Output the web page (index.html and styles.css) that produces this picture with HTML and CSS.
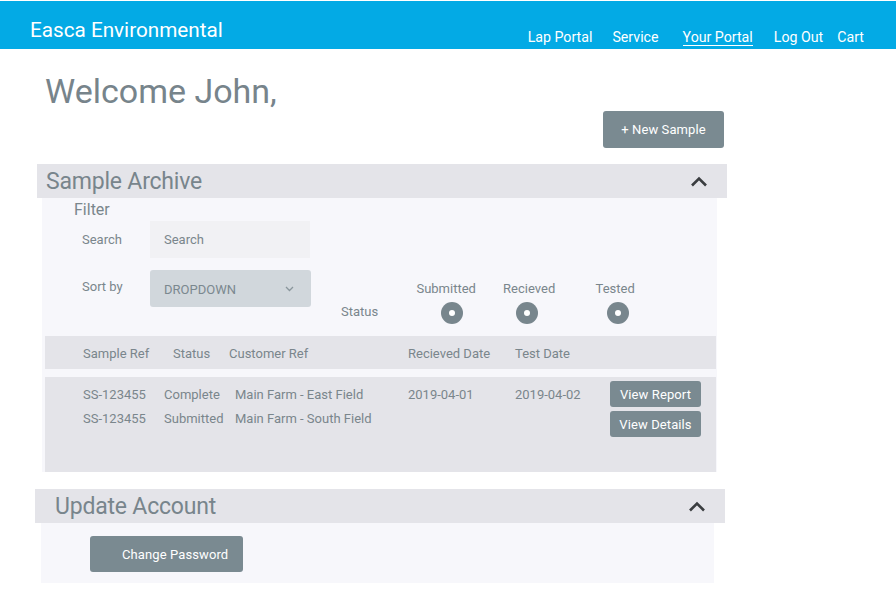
FILE: index.html
```html
<!DOCTYPE html>
<html>
<head>
<meta charset="utf-8">
<link rel="stylesheet" href="styles.css">
</head>
<body>
<header class="topbar">
  <div class="brand">Easca Environmental</div>
  <nav class="nav">
    <a class="nav-link">Lap Portal</a>
    <a class="nav-link">Service</a>
    <a class="nav-link active">Your Portal</a>
    <a class="nav-link">Log Out</a>
    <a class="nav-link cart">Cart</a>
  </nav>
</header>
<main class="main">
  <h1 class="welcome">Welcome John,</h1>
  <div class="actions">
    <button class="btn btn-new">+ New Sample</button>
  </div>

  <section class="section archive">
    <div class="section-head">
      <h2 class="section-title">Sample Archive</h2>
      <svg class="chevron" width="18" height="11" viewBox="0 0 18 11"><path d="M2 9.5 L9 2.5 L16 9.5" fill="none" stroke="#3a3d40" stroke-width="2.6"/></svg>
    </div>
    <div class="panel archive-panel">
      <div class="filter-title">Filter</div>
      <div class="filter-area">
        <div class="fields">
          <div class="field-row">
            <span class="field-label">Search</span>
            <div class="input">Search</div>
          </div>
          <div class="field-row">
            <span class="field-label sort">Sort by</span>
            <div class="select"><span>DROPDOWN</span>
              <svg width="9" height="6" viewBox="0 0 9 6"><path d="M1 1 L4.5 4.5 L8 1" fill="none" stroke="#8a969c" stroke-width="1.3"/></svg>
            </div>
          </div>
        </div>
        <div class="status">
          <span class="status-label">Status</span>
          <div class="status-col c1"><span>Submitted</span><i class="dot"></i></div>
          <div class="status-col c2"><span>Recieved</span><i class="dot"></i></div>
          <div class="status-col c3"><span>Tested</span><i class="dot"></i></div>
        </div>
      </div>
      <div class="table">
        <div class="thead">
          <span class="h1c">Sample Ref</span>
          <span class="h2c">Status</span>
          <span class="h3c">Customer Ref</span>
          <span class="h4c">Recieved Date</span>
          <span class="h5c">Test Date</span>
        </div>
        <div class="tbody">
          <div class="rows">
            <div class="row">
              <span class="d1">SS-123455</span>
              <span class="d2">Complete</span>
              <span class="d3">Main Farm - East Field</span>
              <span class="d4">2019-04-01</span>
              <span class="d5">2019-04-02</span>
            </div>
            <div class="row">
              <span class="d1">SS-123455</span>
              <span class="d2">Submitted</span>
              <span class="d3">Main Farm - South Field</span>
              <span class="d4"></span>
              <span class="d5"></span>
            </div>
          </div>
          <div class="row-actions">
            <button class="btn btn-sm">View Report</button>
            <button class="btn btn-sm">View Details</button>
          </div>
        </div>
      </div>
    </div>
  </section>

  <section class="section account">
    <div class="section-head">
      <h2 class="section-title">Update Account</h2>
      <svg class="chevron" width="18" height="11" viewBox="0 0 18 11"><path d="M2 9.5 L9 2.5 L16 9.5" fill="none" stroke="#3a3d40" stroke-width="2.6"/></svg>
    </div>
    <div class="panel account-panel">
      <button class="btn btn-pass">Change Password</button>
    </div>
  </section>
</main>
</body>
</html>
```
FILE: styles.css
```css
* { box-sizing: border-box; }
html, body { margin: 0; padding: 0; background: #ffffff; }
body {
  font-family: Roboto, "Liberation Sans", Arial, sans-serif;
  color: #7a868c;
  padding-top: 1px;
}
.topbar {
  height: 48px;
  background: #03aae5;
  display: flex;
  justify-content: space-between;
  color: #ffffff;
}
.brand {
  font-size: 20.7px;
  padding-left: 30px;
  padding-top: 17px;
  line-height: 24px;
}
.nav {
  display: flex;
  padding-right: 32px;
  padding-top: 27px;
}
.nav-link {
  font-size: 14.2px;
  line-height: 18px;
  margin-left: 20px;
  color: #ffffff;
}
.nav-link.active {
  margin-left: 24px;
  margin-right: 1px;
  border-bottom: 1px solid #ffffff;
  height: 18px;
}
.nav-link.cart { margin-left: 14px; }

.main {
  padding-left: 37px;
  width: 727px;
}
.welcome {
  margin: 0;
  padding-left: 8px;
  padding-top: 21px;
  font-size: 34px;
  font-weight: 400;
  line-height: 42px;
  color: #77848b;
}
.actions {
  display: flex;
  justify-content: flex-end;
  padding-right: 3px;
  margin-top: -1px;
}
.btn {
  font-family: Roboto, "Liberation Sans", Arial, sans-serif;
  border: 0;
  background: #7a8a91;
  color: #ffffff;
  border-radius: 3px;
  padding: 0;
  cursor: pointer;
  font-weight: 400;
  letter-spacing: 0.1px;
}
.btn-new {
  width: 121px;
  height: 37px;
  font-size: 13px;
}
.section { width: 690px; }
.archive { margin-top: 16px; }
.section-head {
  height: 34px;
  background: #e4e4e9;
  display: flex;
  align-items: center;
  justify-content: space-between;
  padding-right: 19px;
}
.section-title {
  margin: 0;
  font-size: 23px;
  font-weight: 400;
  line-height: 34px;
  padding-left: 9px;
  padding-top: 2px;
  color: #78858c;
  letter-spacing: -0.2px;
}
.panel { background: #f7f7fb; }
.archive-panel {
  margin-left: 5px;
  width: 675px;
  padding-top: 2px;
}
.filter-title {
  font-size: 16px;
  line-height: 20px;
  padding-left: 32px;
}
.filter-area {
  display: flex;
  align-items: flex-start;
}
.fields {
  padding-left: 40px;
  padding-top: 1px;
}
.field-row {
  display: flex;
  align-items: center;
}
.field-row + .field-row { margin-top: 12px; }
.field-label {
  width: 68px;
  font-size: 13px;
  position: relative;
  top: 0;
}
.field-label.sort { top: -2px; }
.input {
  width: 160px;
  height: 37px;
  background: #f1f1f4;
  font-size: 13px;
  line-height: 37px;
  padding-left: 14px;
  color: #7a868c;
}
.select {
  width: 161px;
  height: 37px;
  background: #d1d7dc;
  border-radius: 3px;
  display: flex;
  align-items: center;
  justify-content: space-between;
  padding-left: 14px;
  padding-right: 17px;
  font-size: 13px;
  color: #7b888f;
}
.select span { position: relative; top: 1px; }
.status {
  display: flex;
  align-items: flex-end;
  margin-left: 30px;
  padding-top: 60px;
}
.status-label {
  font-size: 13px;
  line-height: 16px;
  margin-bottom: 4px;
}
.status-col {
  display: flex;
  flex-direction: column;
  align-items: center;
  font-size: 13px;
  line-height: 16px;
}
.status-col.c1 { margin-left: 37px; width: 62px; }
.status-col.c2 { margin-left: 24px; width: 56px; }
.status-col.c3 { margin-left: 37px; width: 42px; }
.status-col span { white-space: nowrap; position: relative; top: 1px; }
.status-col.c1 .dot { margin-left: 12px; }
.status-col.c2 .dot { margin-left: -5px; }
.status-col.c3 .dot { margin-left: 5px; }
.dot {
  display: block;
  width: 22px;
  height: 22px;
  border-radius: 50%;
  background: #78868d;
  margin-top: 6px;
  position: relative;
}
.dot::after {
  content: "";
  position: absolute;
  left: 8px;
  top: 8px;
  width: 6px;
  height: 6px;
  border-radius: 50%;
  background: #ffffff;
}
.table {
  margin: 12px 1px 0 3px;
}
.thead {
  height: 33px;
  background: #e4e4e9;
  display: flex;
  align-items: center;
  padding-left: 38px;
  padding-top: 1px;
  font-size: 13px;
}
.h1c { width: 90px; }
.h2c { width: 56px; }
.h3c { width: 179px; }
.h4c { width: 107px; }
.tbody {
  margin-top: 8px;
  height: 95px;
  background: #e4e4e9;
  display: flex;
  padding-left: 38px;
  font-size: 13px;
}
.rows { padding-top: 5px; }
.row {
  display: flex;
  height: 24px;
  align-items: center;
}
.d1 { width: 81px; }
.d2 { width: 71px; }
.d3 { width: 173px; }
.d4 { width: 107px; }
.d5 { width: 95px; }
.row-actions {
  display: flex;
  flex-direction: column;
  gap: 4px;
  padding-top: 4px;
}
.btn-sm {
  width: 91px;
  height: 26px;
  font-size: 13px;
}
.account {
  margin-top: 17px;
  margin-left: -2px;
}
.account .section-title { padding-left: 20px; }
.account .section-head { padding-right: 19px; }
.account-panel {
  margin-left: 6px;
  width: 673px;
  height: 60px;
  padding-top: 13px;
  padding-left: 49px;
}
.btn-pass {
  width: 153px;
  height: 36px;
  font-size: 13px;
  text-align: left;
  padding-left: 32px;
}
```
